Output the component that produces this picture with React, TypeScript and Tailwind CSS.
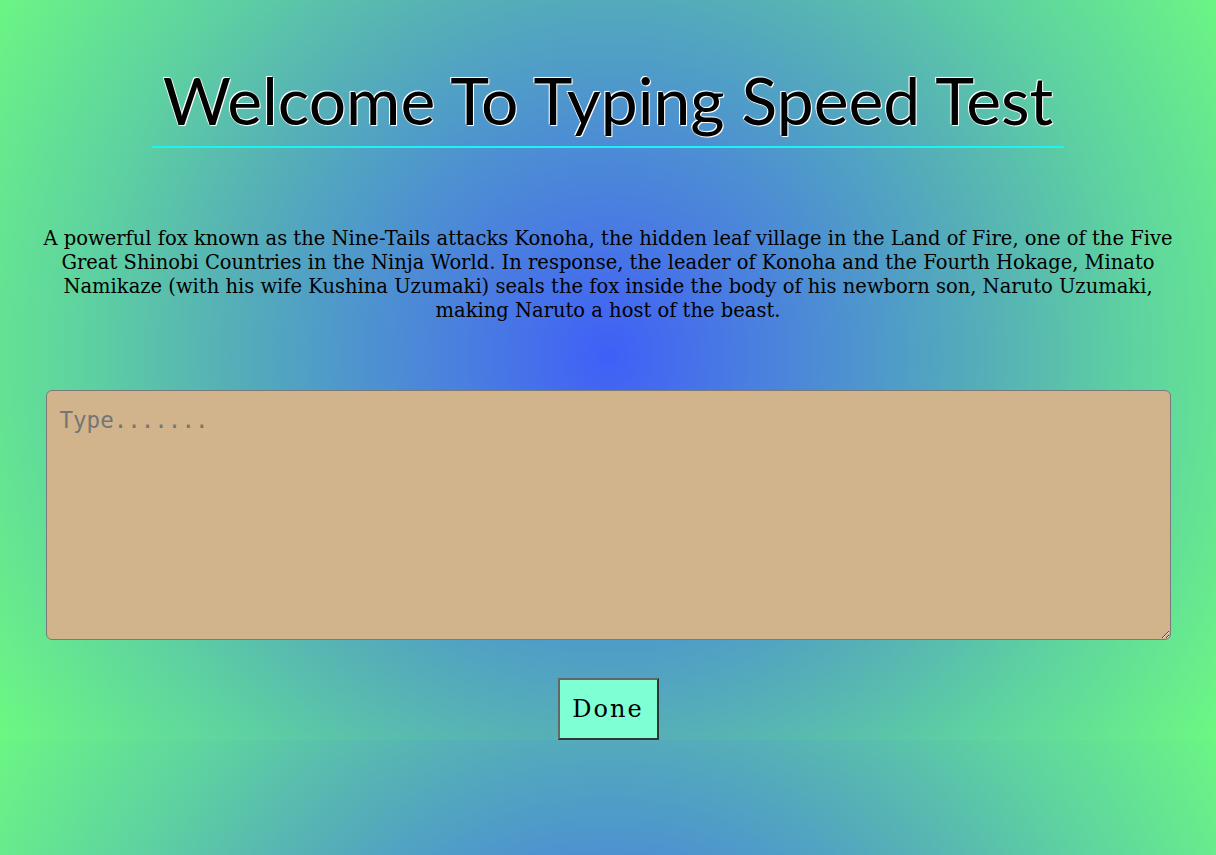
import React from "react";

export default function App() {
  return (
    <div className="min-h-[855px] w-full bg-[radial-gradient(circle_at_50%_48%,#3f5ff8_0%,#4a7ee0_20%,#4f9cc8_40%,#55aeb8_52%,#5fd59e_75%,#6cf882_100%)] bg-[length:100%_740px] bg-repeat flex flex-col items-center">
      <h1
        className="mt-[62px] text-[66px] leading-[76px] text-black font-['Lato',sans-serif] [text-shadow:0_0_2px_#fff,0_0_1px_#fff,1px_1px_0_#fff,-1px_-1px_0_#fff]"
      >
        Welcome To Typing Speed Test
      </h1>
      <div className="mt-[8px] w-[912px] h-[2px] bg-[#1ef2f2]" />
      <p className="mt-[79px] px-[40px] text-center text-[19.5px] leading-[24px] text-black font-['DejaVu_Serif',serif]">
        A powerful fox known as the Nine-Tails attacks Konoha, the hidden leaf village in the Land of Fire, one of the Five
        Great Shinobi Countries in the Ninja World. In response, the leader of Konoha and the Fourth Hokage, Minato
        Namikaze (with his wife Kushina Uzumaki) seals the fox inside the body of his newborn son, Naruto Uzumaki,
        making Naruto a host of the beast.
      </p>
      <textarea
        placeholder="Type......."
        className="mt-[67px] w-[1125px] h-[250px] bg-[#d2b48c] border border-[#7a7a7a] rounded-[6px] px-[13px] py-[13px] text-[22.5px] font-['DejaVu_Sans_Mono',monospace] placeholder:text-[#757575] outline-none"
      />
      <button className="mt-[38px] w-[101px] h-[62px] bg-[#7fffd4] border-2 border-[#333] border-t-[#666] border-l-[#666] text-[24px] tracking-[2px] font-['DejaVu_Serif',serif] text-black">
        Done
      </button>
    </div>
  );
}
